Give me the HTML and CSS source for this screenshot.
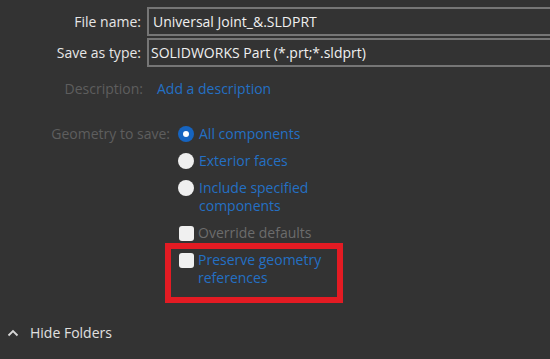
FILE: index.html
```html
<!DOCTYPE html>
<html lang="en">
<head>
    <meta charset="UTF-8">
    <title>Save As</title>
    <link rel="stylesheet" href="styles.css">
</head>
<body>
    <div class="dialog">
        <div class="fields">
            <div class="field-row">
                <label class="field-label">File name:</label>
                <div class="field-box">Universal Joint_&amp;.SLDPRT</div>
            </div>
            <div class="field-row">
                <label class="field-label">Save as type:</label>
                <div class="field-box type-box">SOLIDWORKS Part (*.prt;*.sldprt)</div>
            </div>
        </div>

        <div class="desc-row">
            <span class="desc-label">Description:</span>
            <a class="link" href="#">Add a description</a>
        </div>

        <div class="geo-row">
            <span class="geo-label">Geometry to save:</span>
            <div class="options">
                <div class="option">
                    <span class="radio checked"></span>
                    <span class="link">All components</span>
                </div>
                <div class="option">
                    <span class="radio"></span>
                    <span class="link">Exterior faces</span>
                </div>
                <div class="option">
                    <span class="radio"></span>
                    <span class="link">Include specified<br>components</span>
                </div>
                <div class="option">
                    <span class="check"></span>
                    <span class="muted">Override defaults</span>
                </div>
                <div class="option marked">
                    <span class="check"></span>
                    <span class="link">Preserve geometry<br>references</span>
                    <span class="red-mark"></span>
                </div>
            </div>
        </div>

        <div class="footer">
            <svg class="chevron" width="12" height="8" viewBox="0 0 12 8">
                <polyline points="1.5,6.5 6,2 10.5,6.5" fill="none" stroke="#d8d8d8" stroke-width="1.8"/>
            </svg>
            <span>Hide Folders</span>
        </div>
    </div>
</body>
</html>
```

FILE: styles.css
```css
body {
    margin: 0;
    padding: 0;
    background-color: #333333;
    font-family: 'Open Sans', 'Noto Sans', sans-serif;
    font-size: 14px;
    color: #e6e6e6;
    overflow: hidden;
}

.dialog {
    height: 359px;
    display: flex;
    flex-direction: column;
}

.fields {
    padding-top: 7px;
    display: flex;
    flex-direction: column;
    gap: 2px;
}

.field-row {
    display: flex;
    align-items: center;
    gap: 6px;
}

.field-label {
    width: 141px;
    text-align: right;
}

.field-box {
    flex: 1;
    height: 25px;
    line-height: 25px;
    margin-right: -20px;
    padding-left: 4px;
    border: 2px solid #767676;
    color: #f0f0f0;
}

.type-box {
    padding-left: 2px;
}

.desc-row {
    display: flex;
    margin-top: 12px;
    line-height: 20px;
    gap: 14px;
}

.desc-label {
    width: 143px;
    text-align: right;
    color: #5e5e5e;
}

.link {
    color: #2470c4;
    text-decoration: none;
}

.muted {
    color: #6c6c6c;
}

.geo-row {
    display: flex;
    margin-top: 26px;
    gap: 8px;
}

.geo-label {
    width: 170px;
    text-align: right;
    color: #5e5e5e;
    line-height: 18px;
}

.options {
    display: flex;
    flex-direction: column;
    gap: 9px;
    line-height: 18px;
}

.option {
    display: flex;
    align-items: flex-start;
    gap: 5px;
    position: relative;
}

.radio {
    width: 16px;
    height: 16px;
    margin-top: 1px;
    border-radius: 50%;
    background-color: #efefef;
    flex-shrink: 0;
    display: flex;
    align-items: center;
    justify-content: center;
}

.radio.checked {
    background-color: #1664c0;
}

.radio.checked::after {
    content: "";
    width: 6px;
    height: 6px;
    border-radius: 50%;
    background-color: #ffffff;
}

.check {
    width: 15px;
    height: 15px;
    margin-top: 2px;
    margin-left: 1px;
    margin-right: -1px;
    border-radius: 3px;
    background-color: #f0f0f0;
    flex-shrink: 0;
}

/* red annotation frame */
.red-mark {
    position: absolute;
    left: -13px;
    top: -8px;
    width: 166px;
    height: 48px;
    border: 6px solid #e31b23;
}

.footer {
    margin-top: auto;
    margin-bottom: 16px;
    display: flex;
    align-items: center;
    line-height: 20px;
    padding-left: 7px;
    gap: 11px;
    color: #e0e0e0;
}

.chevron {
    display: block;
}
```
